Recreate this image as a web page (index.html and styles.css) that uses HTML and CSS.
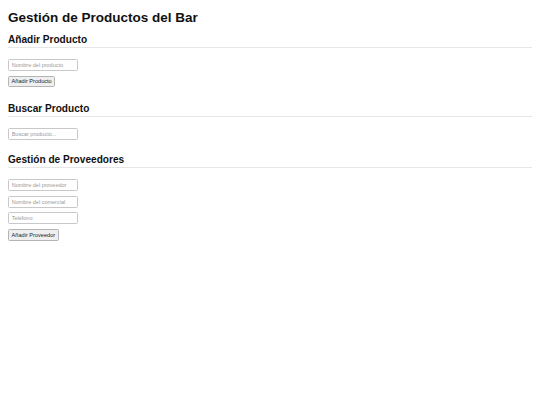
FILE: index.html
```html
<!DOCTYPE html>
<html lang="es">
<head>
    <meta charset="UTF-8">
    <meta name="viewport" content="width=device-width, initial-scale=1.0">
    <title>Gestión de Productos del Bar</title>
    <link rel="stylesheet" href="styles.css">
</head>
<body>
    <h1>Gestión de Productos del Bar</h1>

    <section class="section">
        <h2>Añadir Producto</h2>
        <div class="form">
            <input type="text" id="productName" placeholder="Nombre del producto">
            <button id="addProduct">Añadir Producto</button>
        </div>
    </section>

    <section class="section">
        <h2>Buscar Producto</h2>
        <div class="form">
            <input type="text" id="searchProduct" placeholder="Buscar producto...">
        </div>
    </section>

    <section class="section">
        <h2>Gestión de Proveedores</h2>
        <div class="form">
            <input type="text" id="supplierName" placeholder="Nombre del proveedor">
            <input type="text" id="salesName" placeholder="Nombre del comercial">
            <input type="text" id="supplierPhone" placeholder="Teléfono">
            <button id="addSupplier">Añadir Proveedor</button>
        </div>
    </section>
</body>
</html>
```
FILE: styles.css
```css
body {
    margin: 0;
    padding: 10px 8px;
    font-family: "Liberation Sans", Arial, sans-serif;
    color: #111;
    background-color: #fff;
}

h1 {
    margin: 0 0 8.6px;
    font-size: 13.5px;
    line-height: 15.5px;
}

.section + .section {
    margin-top: 14.2px;
}

.section h2 {
    margin: 0;
    padding-bottom: 1.6px;
    font-size: 10.1px;
    line-height: 11.5px;
    border-bottom: 1px solid #e6e6e6;
}

.form {
    display: flex;
    flex-direction: column;
    align-items: flex-start;
    gap: 4.8px;
    margin-top: 10.7px;
}

input {
    box-sizing: border-box;
    width: 70px;
    height: 12px;
    padding: 0 2.7px;
    font-family: inherit;
    font-size: 5.5px;
    color: #222;
    border: 1px solid #c8c8c8;
    border-radius: 1.5px;
}

input::placeholder {
    color: #9a9a9a;
}

button {
    box-sizing: border-box;
    height: 11.5px;
    margin-bottom: 1.6px;
    padding: 0 2.6px;
    font-family: inherit;
    font-size: 5.6px;
    color: #222;
    background-color: #efefef;
    border: 1px solid #b4b4b4;
    border-radius: 1.5px;
    cursor: pointer;
}
```
